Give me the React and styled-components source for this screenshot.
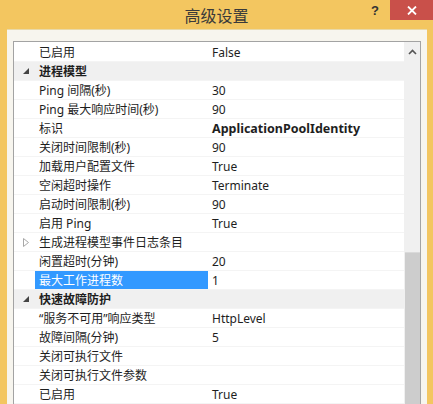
import React from "react";
import styled, { createGlobalStyle } from "styled-components";

const Global = createGlobalStyle`
  html, body { margin: 0; padding: 0; }
  body { font-family: "Noto Sans", "Open Sans", "Noto Sans CJK SC", sans-serif; }
`;

const Window = styled.div`
  width: 433px;
  height: 404px;
  background: #f3c660;
  display: flex;
  flex-direction: column;
  overflow: hidden;
`;

const TitleBar = styled.div`
  height: 29px;
  flex: none;
  position: relative;
  display: flex;
  align-items: center;
  justify-content: center;
`;

const Title = styled.div`
  font-family: "Noto Sans CJK SC", sans-serif;
  font-size: 16px;
  color: #3a3a3a;
  margin-top: 1px;
`;

const Help = styled.div`
  position: absolute;
  left: 371px;
  top: 3px;
  font-family: "Liberation Sans", sans-serif;
  font-weight: bold;
  font-size: 13px;
  color: #333;
`;

const Close = styled.div`
  position: absolute;
  right: 0;
  top: 0;
  width: 43px;
  height: 20px;
  background: #c9504a;
  display: flex;
  align-items: center;
  justify-content: center;
`;

const Body = styled.div`
  flex: 1;
  margin: 0 6px 0 7px;
  background: #f7f5ee;
  border-top: 1px solid #e9d9a8;
  padding: 11px 6px 0 6px;
  display: flex;
  min-height: 0;
`;

const Grid = styled.div`
  flex: 1;
  border: 1px solid #a3a3a3;
  border-bottom: none;
  background: #fff;
  display: flex;
  min-height: 0;
`;

const List = styled.div`
  flex: 1;
  padding-top: 1px;
  overflow: hidden;
`;

const Row = styled.div`
  height: 19px;
  display: flex;
  align-items: center;
  box-sizing: border-box;
  border-bottom: 1px solid #f4f4f4;
  background: ${(p) => (p.$cat ? "#f0f0f0" : "#fff")};
  font-size: 12px;
  color: #1e1e1e;
  font-weight: ${(p) => (p.$cat ? "bold" : "normal")};
`;

const Gutter = styled.div`
  width: 21px;
  flex: none;
  height: 100%;
  display: flex;
  align-items: center;
  justify-content: center;
  padding-left: 2px;
  box-sizing: border-box;
`;

const Name = styled.div`
  width: 173px;
  flex: none;
  height: 100%;
  display: flex;
  align-items: center;
  padding-left: 4px;
  box-sizing: border-box;
  white-space: nowrap;
  background: ${(p) => (p.$sel ? "#3399ff" : "transparent")};
  color: ${(p) => (p.$sel ? "#fff" : "inherit")};
`;

const Value = styled.div`
  flex: 1;
  height: 100%;
  display: flex;
  align-items: center;
  padding-left: 4px;
  white-space: nowrap;
  font-size: ${(p) => (p.$bold ? "12.5px" : "12px")};
  font-weight: ${(p) => (p.$bold ? "bold" : "normal")};
`;

const Scroll = styled.div`
  width: 15px;
  flex: none;
  background: #f0f0f0;
  display: flex;
  flex-direction: column;
  border-left: 1px solid #f0f0f0;
`;

const Arrow = styled.div`
  height: 20px;
  display: flex;
  align-items: center;
  justify-content: center;
  flex: none;
`;

const Track = styled.div`
  flex: 1;
  display: flex;
  flex-direction: column;
  padding-top: 190px;
`;

const Thumb = styled.div`
  flex: 1;
  background: #cdcdcd;
  border-top: 1px solid #dadada;
`;

const rows = [
  { n: "已启用", v: "False" },
  { cat: true, n: "进程模型" },
  { n: "Ping 间隔(秒)", v: "30" },
  { n: "Ping 最大响应时间(秒)", v: "90" },
  { n: "标识", v: "ApplicationPoolIdentity", b: true },
  { n: "关闭时间限制(秒)", v: "90" },
  { n: "加载用户配置文件", v: "True" },
  { n: "空闲超时操作", v: "Terminate" },
  { n: "启动时间限制(秒)", v: "90" },
  { n: "启用 Ping", v: "True" },
  { n: "生成进程模型事件日志条目", v: "", collapsed: true },
  { n: "闲置超时(分钟)", v: "20" },
  { n: "最大工作进程数", v: "1", sel: true },
  { cat: true, n: "快速故障防护" },
  { n: "“服务不可用”响应类型", v: "HttpLevel" },
  { n: "故障间隔(分钟)", v: "5" },
  { n: "关闭可执行文件", v: "" },
  { n: "关闭可执行文件参数", v: "" },
  { n: "已启用", v: "True" },
];

const Expanded = () => (
  <svg width="6" height="6" viewBox="0 0 6 6">
    <polygon points="6,0 6,6 0,6" fill="#444" />
  </svg>
);

const Collapsed = () => (
  <svg width="6" height="9" viewBox="0 0 6 9">
    <polygon points="0.5,0.5 5.5,4.5 0.5,8.5" fill="none" stroke="#a8a8a8" strokeWidth="1" />
  </svg>
);

export default function App() {
  return (
    <>
      <Global />
      <Window>
        <TitleBar>
          <Title>高级设置</Title>
          <Help>?</Help>
          <Close>
            <svg width="10" height="9" viewBox="0 0 10 9">
              <path d="M1 0.5 L9 8.5 M9 0.5 L1 8.5" stroke="#fff" strokeWidth="1.8" />
            </svg>
          </Close>
        </TitleBar>
        <Body>
          <Grid>
            <List>
              {rows.map((r, i) => (
                <Row key={i} $cat={r.cat}>
                  <Gutter>
                    {r.cat ? <Expanded /> : r.collapsed ? <Collapsed /> : null}
                  </Gutter>
                  <Name $sel={r.sel}>{r.n}</Name>
                  {!r.cat && <Value $bold={r.b}>{r.v}</Value>}
                </Row>
              ))}
            </List>
            <Scroll>
              <Arrow>
                <svg width="9" height="6" viewBox="0 0 9 6">
                  <path d="M1 5 L4.5 1.5 L8 5" fill="none" stroke="#555" strokeWidth="1.6" />
                </svg>
              </Arrow>
              <Track>
                <Thumb />
              </Track>
            </Scroll>
          </Grid>
        </Body>
      </Window>
    </>
  );
}
